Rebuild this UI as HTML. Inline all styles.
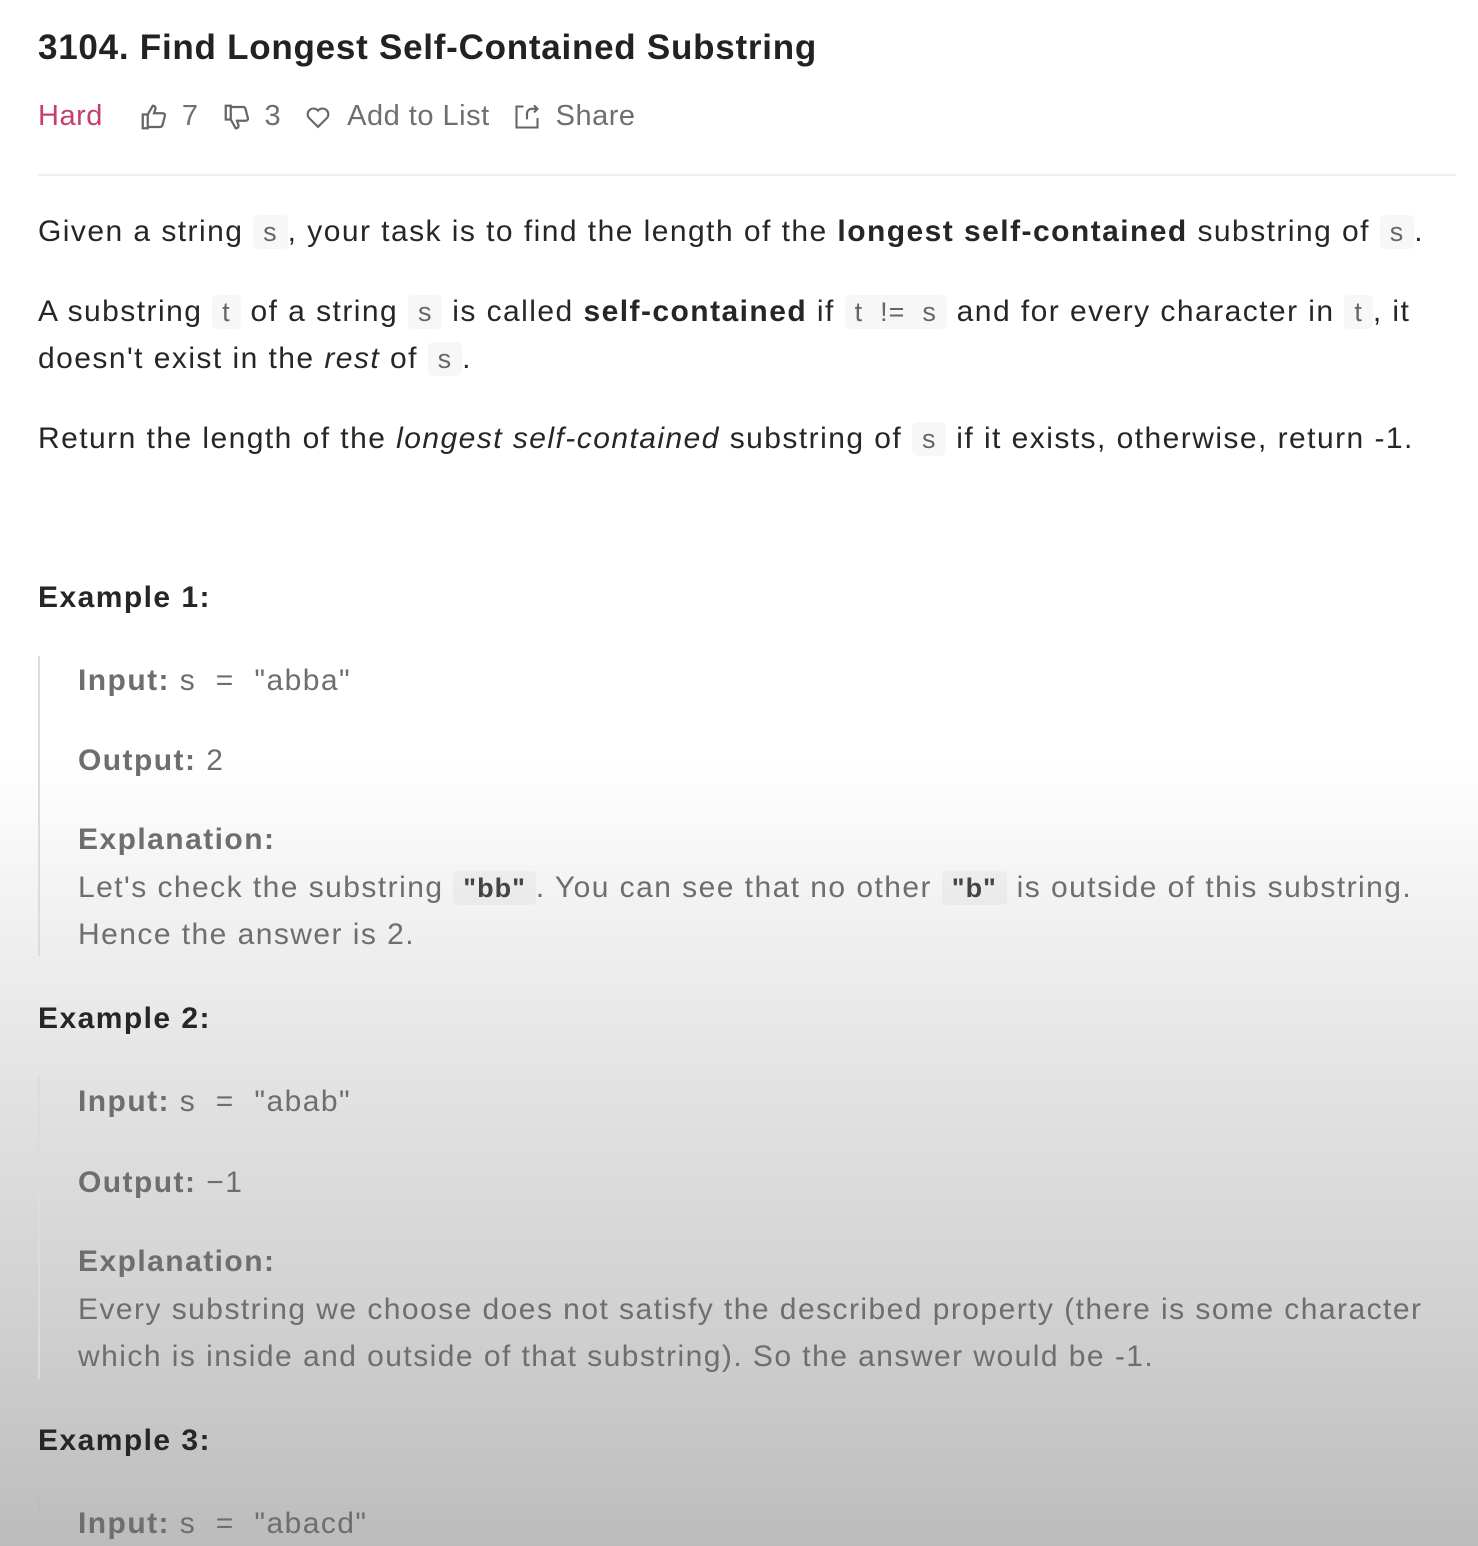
<!DOCTYPE html>
<html><head><meta charset="utf-8"><style>
html,body{margin:0;padding:0}
body{width:1478px;height:1546px;position:relative;overflow:hidden;font-family:"Liberation Sans",sans-serif;
background:linear-gradient(to bottom,#fff 0px,#fff 760px,#f4f4f4 880px,#e3e3e3 1080px,#d2d2d2 1300px,#bcbcbc 1546px);color:#262626}
.l{position:absolute;left:38px;white-space:nowrap;font-size:30px;line-height:40px;letter-spacing:1.45px}
.e{left:78px;color:#6e6e6e}
code{font-family:"Liberation Sans",sans-serif;font-size:27px;background:rgba(0,0,0,0.03);border-radius:5px;padding:2px 10px;color:#666;letter-spacing:1px}
.e code{color:#444;font-weight:bold}
b{font-weight:bold}
.bq{position:absolute;left:38px;width:2px;background:#dcdcdc}
.meta{position:absolute;top:100px;left:38px;font-size:29px;color:#6f6f6f;display:flex;align-items:center;white-space:nowrap;letter-spacing:0.5px}
.meta svg{stroke:#666;fill:none;stroke-width:1.8}
</style></head><body>
<div class="l" style="top:28px;font-size:35px;letter-spacing:0.75px;font-weight:bold;color:#222">3104. Find Longest Self-Contained Substring</div>
<div class="meta">
<span style="color:#c4406a">Hard</span>
<svg style="margin-left:35px" width="32" height="30" viewBox="0 0 24 24"><path d="M3 10h4v11H3zM7 10l4-7c2 0 2.5 1.5 2 3l-1 3h7c1.2 0 2 1 1.7 2.2l-2 7.5c-.3.8-1 1.3-1.8 1.3H7"/></svg>
<span style="margin-left:12px">7</span>
<svg style="margin-left:22px" width="32" height="30" viewBox="0 0 24 24"><path d="M3 3h4v11H3zM7 14l4 7c2 0 2.5-1.5 2-3l-1-3h7c1.2 0 2-1 1.7-2.2l-2-7.5C18.4 4.5 17.7 4 17 4H7"/></svg>
<span style="margin-left:12px">3</span>
<svg style="margin-left:22px" width="30" height="28" viewBox="0 0 24 24"><path d="M12 20.5l-8-8a5 5 0 017.5-6.5l.5.6.5-.6A5 5 0 0120 12.5z"/></svg>
<span style="margin-left:14px">Add to List</span>
<svg style="margin-left:22px" width="30" height="28" viewBox="0 0 24 24"><path d="M9 3H3v18h18v-8M12 14V9a4 4 0 014-4h5M18 2l3 3-3 3"/></svg>
<span style="margin-left:14px">Share</span>
</div>
<div style="position:absolute;top:174px;left:38px;width:1418px;height:2px;background:#efefef"></div>
<div class="l" style="top:212px">Given a string <code>s</code>, your task is to find the length of the <b>longest self-contained</b> substring of <code>s</code>.</div>
<div class="l" style="top:292px">A substring <code>t</code> of a string <code>s</code> is called <b>self-contained</b> if <code>t &nbsp;!= &nbsp;s</code> and for every character in <code>t</code>, it</div>
<div class="l" style="top:339px">doesn't exist in the <i>rest</i> of <code>s</code>.</div>
<div class="l" style="top:419px">Return the length of the <i>longest self-contained</i> substring of <code>s</code> if it exists, otherwise, return -1.</div>

<div class="l" style="top:578px;font-weight:bold">Example 1:</div>
<div class="bq" style="top:656px;height:300px"></div>
<div class="l e" style="top:661px"><b>Input:</b> s &nbsp;= &nbsp;"abba"</div>
<div class="l e" style="top:741px"><b>Output:</b> 2</div>
<div class="l e" style="top:820px"><b>Explanation:</b></div>
<div class="l e" style="top:868px">Let's check the substring <code>"bb"</code>. You can see that no other <code>"b"</code> is outside of this substring.</div>
<div class="l e" style="top:915px">Hence the answer is 2.</div>

<div class="l" style="top:999px;font-weight:bold">Example 2:</div>
<div class="bq" style="top:1077px;height:302px"></div>
<div class="l e" style="top:1082px"><b>Input:</b> s &nbsp;= &nbsp;"abab"</div>
<div class="l e" style="top:1163px"><b>Output:</b> −1</div>
<div class="l e" style="top:1242px"><b>Explanation:</b></div>
<div class="l e" style="top:1290px">Every substring we choose does not satisfy the described property (there is some character</div>
<div class="l e" style="top:1337px">which is inside and outside of that substring). So the answer would be -1.</div>

<div class="l" style="top:1421px;font-weight:bold">Example 3:</div>
<div class="bq" style="top:1498px;height:48px;background:#bdbdbd"></div>
<div class="l e" style="top:1504px"><b>Input:</b> s &nbsp;= &nbsp;"abacd"</div>
</body></html>
